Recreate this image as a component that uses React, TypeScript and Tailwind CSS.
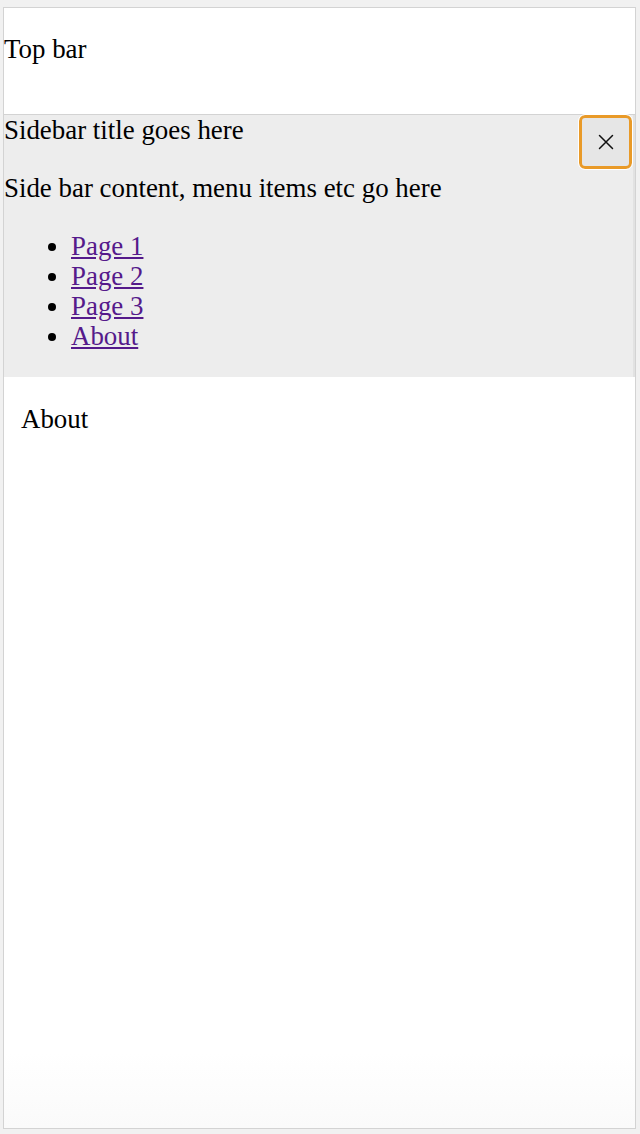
import React from 'react';

const links = ['Page 1', 'Page 2', 'Page 3', 'About'];

export default function App() {
  return (
    <div className="h-[1134px] bg-[#f1f1f1] pt-[7px] pl-[3px] pr-[4px] pb-[5px]" style={{ fontFamily: '"Liberation Serif", "Times New Roman", serif' }}>
      <div className="flex h-full flex-col border border-[#d3d3d3] bg-white text-[26.9px] text-black">
        {/* Top bar */}
        <div className="h-[107px] border-b border-[#d3d3d3] pt-[26px]">
          <div className="leading-[30px]">Top bar</div>
        </div>

        {/* Sidebar */}
        <div className="relative border-r-2 border-[#e2e2e2] bg-[#ededed] pb-[26px]">
          <div className="leading-[30px]">Sidebar title goes here</div>
          <p className="mt-[28px] leading-[30px]">Side bar content, menu items etc go here</p>
          <ul className="mt-[28px] list-disc pl-[67px] leading-[30px]">
            {links.map((l) => (
              <li key={l}>
                <a href="#" className="text-[#551a8b] underline">{l}</a>
              </li>
            ))}
          </ul>
          <button className="absolute right-[1px] top-0 flex h-[54px] w-[53px] items-center justify-center rounded-[6px] border-[3px] border-[#e99a28] bg-[#e6e6e6] outline outline-1 outline-white">
            <svg width="16" height="16" viewBox="0 0 16 16" fill="none" stroke="#111" strokeWidth="1.5" strokeLinecap="round">
              <path d="M1.5 1.5l13 13M14.5 1.5l-13 13" />
            </svg>
          </button>
        </div>

        {/* Main */}
        <div className="flex-1 bg-gradient-to-b from-white from-90% to-[#fafafa] px-[17px] pt-[27px]">
          <div className="leading-[30px]">About</div>
        </div>
      </div>
    </div>
  );
}
